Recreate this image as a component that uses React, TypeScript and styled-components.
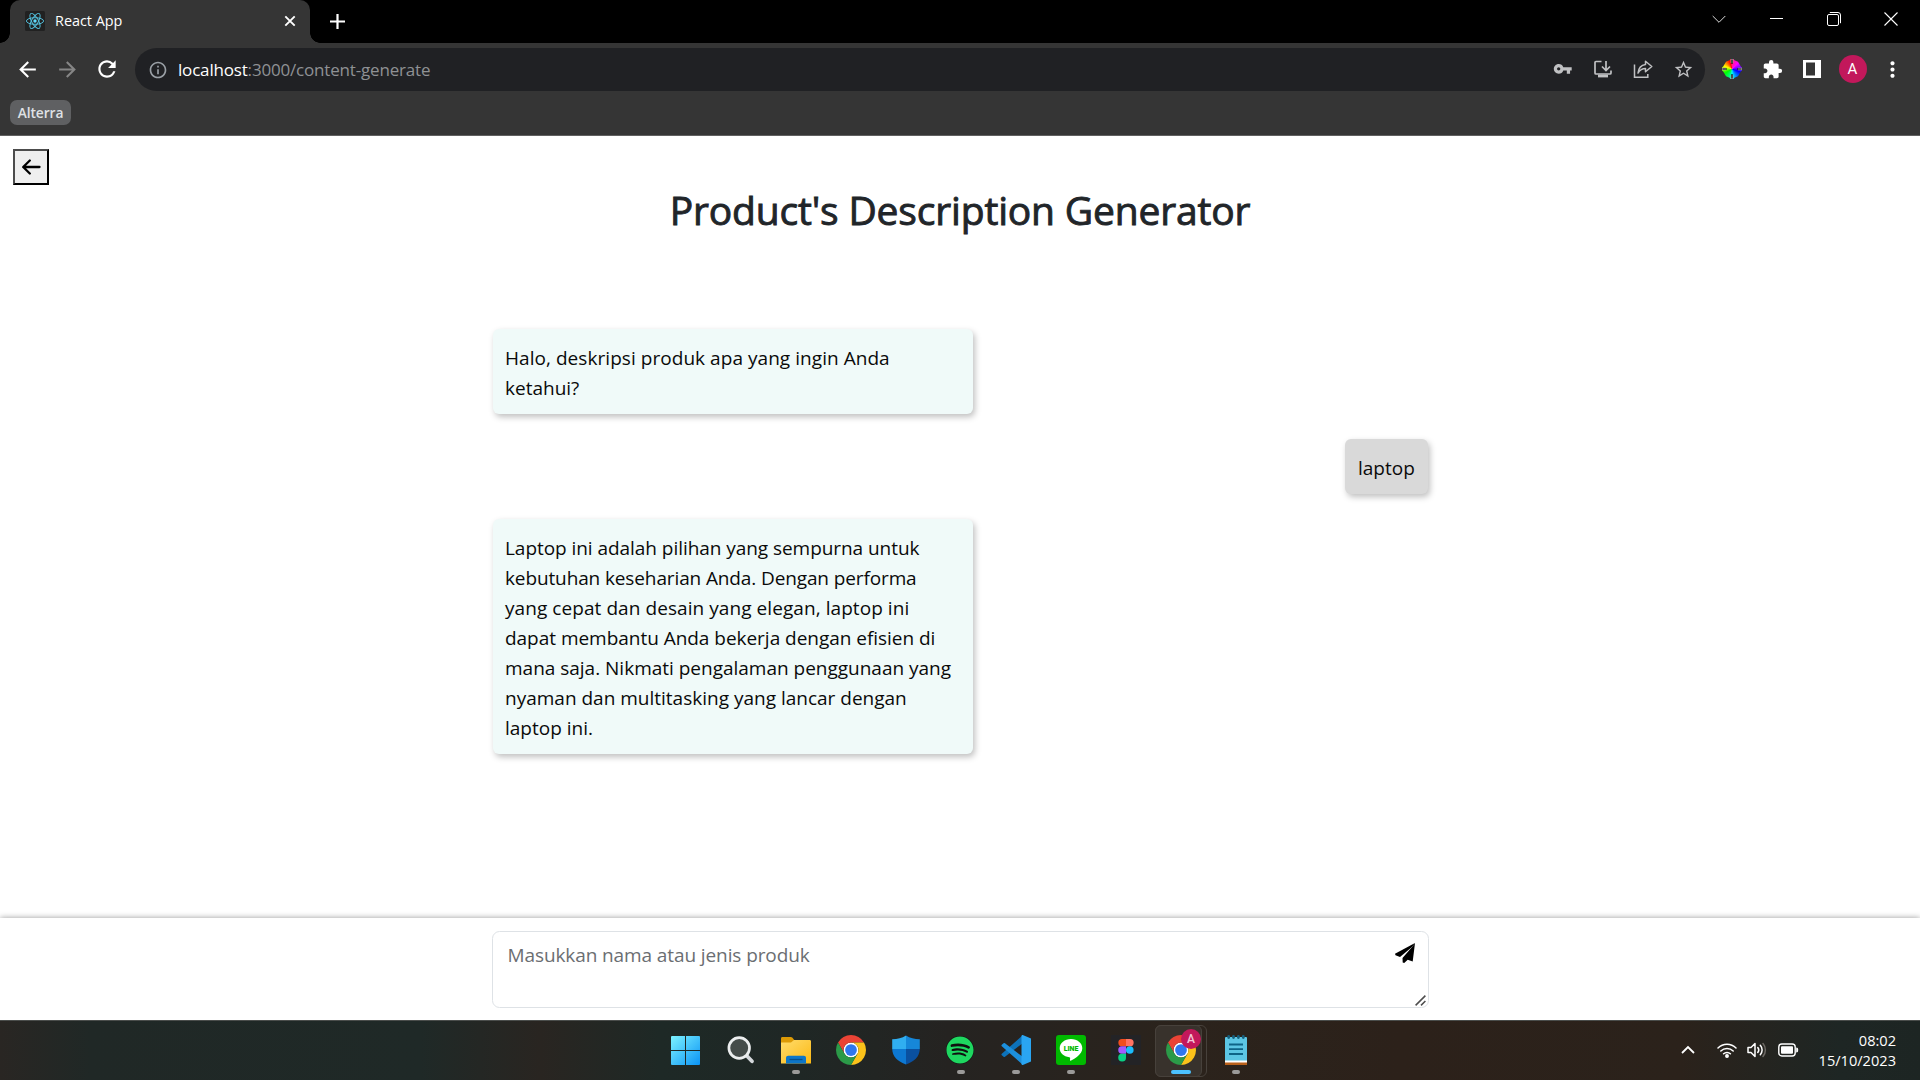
import React from "react";
import styled, { createGlobalStyle } from "styled-components";
import {
  MdArrowBack,
  MdArrowForward,
  MdExtension,
  MdInfoOutline,
  MdMoreVert,
  MdRefresh,
  MdStarBorder,
  MdVpnKey,
} from "react-icons/md";
import { FaSpotify } from "react-icons/fa";

const GlobalStyle = createGlobalStyle`
  * { box-sizing: border-box; }
  html, body { margin: 0; padding: 0; overflow: hidden; }
  body { font-family: "Open Sans", "Noto Sans", sans-serif; background: #fff; }
  svg { display: block; flex: none; }
`;

const Screen = styled.div`
  width: 1920px;
  height: 1080px;
  display: flex;
  flex-direction: column;
  overflow: hidden;
`;

/* ---------- browser chrome ---------- */

const TabStrip = styled.div`
  height: 43px;
  background: #000;
  display: flex;
  padding-left: 10px;
`;

const Tab = styled.div`
  position: relative;
  width: 300px;
  height: 43px;
  background: #353535;
  border-radius: 10px 10px 0 0;
  display: flex;
  align-items: center;
  padding: 0 14px 1px 15px;
  color: #fff;

  &::before,
  &::after {
    content: "";
    position: absolute;
    bottom: 0;
    width: 10px;
    height: 10px;
  }
  &::before {
    left: -10px;
    background: radial-gradient(circle at 0 0, #000 9.5px, #353535 10px);
  }
  &::after {
    right: -10px;
    background: radial-gradient(circle at 100% 0, #000 9.5px, #353535 10px);
  }
`;

const TabTitle = styled.span`
  flex: 1;
  margin-left: 10px;
  font-size: 14.4px;
  line-height: 20px;
`;

const NewTab = styled.div`
  width: 55px;
  height: 42px;
  display: grid;
  place-items: center;
`;

const WindowControls = styled.div`
  margin-left: auto;
  height: 37px;
  display: flex;
`;

const WindowButton = styled.div`
  width: 57.4px;
  display: grid;
  place-items: center;
`;

const Toolbar = styled.div`
  height: 53px;
  background: #353535;
  display: flex;
  align-items: center;
  padding: 0 8px 0 7px;
`;

const ToolButton = styled.div<{ $tone?: string }>`
  width: 40px;
  height: 40px;
  padding-bottom: 1px;
  flex: none;
  display: grid;
  place-items: center;
  color: ${(p) => p.$tone ?? "#fff"};
`;

const Omnibox = styled.div`
  flex: 1;
  height: 43px;
  margin: 0 7px 0 8px;
  padding: 0 2px 0 13px;
  border-radius: 22px;
  background: #202124;
  display: flex;
  align-items: center;
  color: #9aa0a6;
`;

const Url = styled.span`
  flex: 1;
  margin-left: 10px;
  font-size: 17px;
  letter-spacing: -0.18px;
  line-height: 24px;
  color: #8f9194;
  b {
    font-weight: 400;
    color: #fff;
  }
`;

const Avatar = styled.div`
  width: 28px;
  height: 28px;
  margin-left: 1px;
  border-radius: 50%;
  background: #c2185b;
  color: #fff;
  font: 15px/28px Roboto, sans-serif;
  text-align: center;
`;

const Bookmarks = styled.div`
  height: 40px;
  background: #353535;
  border-bottom: 1px solid #606060;
  padding: 4px 10px;
`;

const BookmarkFolder = styled.div`
  width: 61px;
  height: 25px;
  border-radius: 7px;
  background: #5f6062;
  color: #dfe1e5;
  font-size: 13.8px;
  font-weight: 600;
  letter-spacing: -0.1px;
  line-height: 25px;
  text-align: center;
`;

/* ---------- page ---------- */

const Page = styled.main`
  height: 884px;
  background: #fff;
  display: flex;
  flex-direction: column;
`;

const PageHeader = styled.header`
  height: 193px;
  padding: 13px;
  display: flex;
  flex-direction: column;
`;

const BackButton = styled.button`
  width: 36px;
  height: 36px;
  padding: 0 1px 0 0;
  border: 2px solid;
  border-color: #4c4c4c #000 #000 #4c4c4c;
  background: #efefef;
  display: grid;
  place-items: center;
`;

const Title = styled.h1`
  margin: 1px 0 0;
  align-self: center;
  font-size: 39px;
  font-weight: 400;
  letter-spacing: -0.17px;
  line-height: 48px;
  color: #212529;
  -webkit-text-stroke: 0.9px #212529;
`;

const Chat = styled.section`
  width: 936px;
  flex: 1;
  margin: 0 auto;
  padding-left: 1px;
  display: flex;
  flex-direction: column;
  gap: 25px;
`;

const Bubble = styled.div<{ $mine?: boolean }>`
  width: ${(p) => (p.$mine ? "83px" : "480px")};
  align-self: ${(p) => (p.$mine ? "flex-end" : "flex-start")};
  padding: 13.5px 0 11.5px ${(p) => (p.$mine ? "13px" : "12px")};
  border-radius: 6px;
  background: ${(p) => (p.$mine ? "#d9d9d9" : "#f0faf9")};
  box-shadow: 2px 3px 6px rgba(0, 0, 0, 0.25);
  font-size: 19px;
  line-height: 30px;
  color: #0a0a0a;
  white-space: nowrap;
`;

const Line = styled.span<{ $track?: number }>`
  display: block;
  letter-spacing: ${(p) => p.$track ?? 0}px;
`;

const Composer = styled.footer`
  height: 102px;
  background: #fff;
  box-shadow: 0 0 6px rgba(0, 0, 0, 0.4);
  display: flex;
  justify-content: center;
  padding-top: 13px;
`;

const Field = styled.div`
  position: relative;
  width: 937px;
  height: 77px;
`;

const Input = styled.textarea`
  width: 100%;
  height: 100%;
  display: block;
  resize: none;
  border: 1px solid #dee2e6;
  border-radius: 7.5px;
  padding: 8px 15px;
  outline: 0;
  background: #fff;
  font: 19px/30px "Open Sans", sans-serif;
  letter-spacing: -0.1px;
  &::placeholder {
    color: #6b6e72;
    opacity: 1;
  }
`;

const SendButton = styled.div`
  position: absolute;
  top: 12px;
  right: 13px;
`;

const Grip = styled.div`
  position: absolute;
  right: 3px;
  bottom: 2px;
`;

/* ---------- taskbar ---------- */

const Taskbar = styled.div`
  position: relative;
  height: 60px;
  border-top: 1px solid #4a4d4b;
  background: linear-gradient(
    90deg,
    #292623 0,
    #202826 90px,
    #1f2927 420px,
    #292521 540px,
    #1e2926 660px,
    #1f2725 800px,
    #252321 950px,
    #2b231c 1180px,
    #2c211a 1400px,
    #2b221b 1680px,
    #1e2624 1840px,
    #1d2523 1920px
  );
  display: flex;
  justify-content: center;
`;

const Apps = styled.div`
  display: flex;
  height: 58px;
  padding-left: 1px;
`;

const AppSlot = styled.div<{ $active?: boolean }>`
  position: relative;
  width: 55px;
  height: 58px;
  display: flex;
  align-items: center;
  justify-content: center;
  isolation: isolate;

  &::before,
  &::after {
    content: "";
    display: ${(p) => (p.$active ? "block" : "none")};
    position: absolute;
    z-index: -1;
    top: 4px;
    height: 50px;
    border: 1px solid #47413b;
    border-radius: 6px;
  }
  &::before {
    left: 2px;
    width: 50px;
  }
  &::after {
    left: 2px;
    width: 45px;
    background: #38322c;
  }
`;

const Indicator = styled.i<{ $active?: boolean }>`
  position: absolute;
  bottom: 5px;
  left: 50%;
  width: ${(p) => (p.$active ? 20 : 8)}px;
  height: 4px;
  border-radius: 2px;
  background: ${(p) => (p.$active ? "#4cc2ff" : "#9b9a99")};
  transform: translateX(-50%);
`;

const ProfileBadge = styled.div`
  position: absolute;
  top: 8px;
  left: 28px;
  width: 20px;
  height: 20px;
  border-radius: 50%;
  background: #c2185b;
  color: #f3c6d7;
  font: 500 12px/20px Roboto, sans-serif;
  text-align: center;
`;

const Tray = styled.div`
  position: absolute;
  right: 24px;
  top: 0;
  height: 57px;
  display: flex;
  align-items: center;
  color: #fff;
`;

const TraySlot = styled.div<{ $w: number }>`
  width: ${(p) => p.$w}px;
  display: grid;
  place-items: center;
`;

const Clock = styled.div`
  width: 88px;
  font-size: 14.6px;
  line-height: 20px;
  text-align: right;
`;

/* ---------- drawings ---------- */

const ReactMark = () => (
  <svg width="20" height="20" viewBox="0 0 20 20">
    <rect width="20" height="20" rx="1.5" fill="#212121" />
    <g fill="none" stroke="#53c1de" strokeWidth="0.95">
      {[30, 90, 150].map((a) => (
        <ellipse key={a} cx="10" cy="10" rx="8.6" ry="3.3" transform={`rotate(${a - 30} 10 10)`} />
      ))}
    </g>
    <circle cx="10" cy="10" r="1.7" fill="#61dafb" />
  </svg>
);

const Chrome = () => (
  <svg width="30" height="30" viewBox="0 0 48 48">
    <circle cx="24" cy="24" r="12" fill="#fff" />
    <path fill="#ea4335" d="M24 12h20.78A24 24 0 0 0 3.22 12l10.39 18A12 12 0 0 1 24 12Z" />
    <path fill="#fbc21a" d="M34.39 30 24 48a24 24 0 0 0 20.78-36H24a12 12 0 0 1 10.39 18Z" />
    <path fill="#2b9a48" d="M13.61 30 3.22 12A24 24 0 0 0 24 48l10.39-18a12 12 0 0 1-20.78 0Z" />
    <circle cx="24" cy="24" r="9.4" fill="#2f77ee" />
  </svg>
);

const WindowsLogo = () => (
  <svg width="29" height="29" viewBox="0 0 29 29">
    <defs>
      <linearGradient id="win" x1="0" y1="0" x2="1" y2="1">
        <stop offset="0" stopColor="#7df3ff" />
        <stop offset="1" stopColor="#0a93f5" />
      </linearGradient>
    </defs>
    <path
      fill="url(#win)"
      d="M1 0h13v14H0V1a1 1 0 0 1 1-1ZM15 0h13a1 1 0 0 1 1 1v13H15ZM0 15h14v14H1a1 1 0 0 1-1-1ZM15 15h14v13a1 1 0 0 1-1 1H15Z"
    />
  </svg>
);

const SearchLogo = () => (
  <svg width="30" height="30" viewBox="0 0 30 30">
    <path d="m20 20 6 6.3" stroke="#d5d8dc" strokeWidth="3.8" strokeLinecap="round" />
    <circle cx="13.2" cy="13" r="10.3" fill="#454c4a" stroke="#eceeef" strokeWidth="2.7" />
  </svg>
);

const Folder = () => (
  <svg width="30" height="30" viewBox="0 0 30 30">
    <defs>
      <linearGradient id="fold" x1="0" y1="0" x2="1" y2="1">
        <stop offset="0" stopColor="#ffdc6c" />
        <stop offset="1" stopColor="#fbb914" />
      </linearGradient>
    </defs>
    <path fill="#dc9a06" d="M1.5 2h8.2c.8 0 1.3.3 1.8.8L14 6v6H0V3.500C0 2.500.6 2 1.500 2Z" />
    <path fill="url(#fold)" d="M0 7.500h10l3-2.500h15.500c1 0 1.500.5 1.500 1.500V28.500H0Z" />
    <path fill="#0d76c8" d="M5 28.500V23c0-1.300.9-2.200 2.200-2.200h15.600c1.300 0 2.200.9 2.200 2.200v5.500Z" />
    <path stroke="#064f8c" strokeWidth="1.300" d="M8.500 24.500h13" />
  </svg>
);

const Shield = () => (
  <svg width="30" height="30" viewBox="0 0 30 30">
    <path fill="#30aef0" d="M15 .5C11 3.200 6.500 4 1.200 4.200V14H15Z" />
    <path fill="#1687d9" d="M15 .5c4 2.700 8.500 3.500 13.800 3.700V14H15Z" />
    <path fill="#0d78d2" d="M1.200 14c.3 7.500 5.300 12.500 13.800 15.500V14Z" />
    <path fill="#0a50a0" d="M28.800 14c-.3 7.500-5.300 12.500-13.800 15.500V14Z" />
  </svg>
);

const SpotifyMark = styled.div`
  width: 28px;
  height: 28px;
  margin-right: 2px;
  border-radius: 50%;
  background: #101010;
  color: #1ed760;
  font-size: 28px;
  display: grid;
  place-items: center;
`;

const VsCode = () => (
  <svg width="30" height="30" viewBox="0 0 30 30">
    <path fill="#0d72ba" d="M.8 18.800 22 0v8L4 21.800c-.5.4-1 .3-1.400 0L.8 20.300c-.5-.5-.5-1 0-1.500Z" />
    <path fill="#1c8fdc" d="M.8 11.200 22 30v-8L4 8.200c-.5-.4-1-.3-1.400 0L.8 9.700c-.5.5-.5 1 0 1.500Z" />
    <path fill="#2aa5f2" d="M21.800 0 30 3.500v23L21.800 30c-.9.2-1.300-.4-1.300-1V1c0-.6.500-1.200 1.300-1Z" />
  </svg>
);

const LineApp = () => (
  <svg width="30" height="30" viewBox="0 0 30 30">
    <rect width="30" height="30" rx="3" fill="#00b900" />
    <path
      fill="#fff"
      d="M15 4C8.700 4 3.700 8 3.700 13.200c0 4.700 4 8.300 9.600 9 1 .2.900.6.800 1.500-.2 1.500-.3 2.400 1 1.800 3.500-1.700 11.200-6.300 11.200-12.300C26.300 8 21.300 4 15 4Z"
    />
    <text
      x="15"
      y="16"
      textAnchor="middle"
      fontFamily="Roboto, sans-serif"
      fontWeight="900"
      fontSize="7"
      fill="#00b900"
    >
      LINE
    </text>
  </svg>
);

const Figma = () => (
  <svg width="30" height="30" viewBox="0 0 30 30">
    <rect width="30" height="30" fill="#232326" />
    <path fill="#f24e1e" d="M15 4v7.300h-4a3.650 3.650 0 0 1 0-7.300Z" />
    <path fill="#ff7262" d="M15 4h4a3.650 3.650 0 0 1 0 7.300h-4Z" />
    <path fill="#a259ff" d="M15 11.300v7.500h-4a3.750 3.750 0 0 1 0-7.500Z" />
    <circle cx="18.800" cy="15" r="3.800" fill="#1abcfe" />
    <path fill="#0acf83" d="M11 18.800h4v3.700a3.900 3.900 0 1 1-4-3.700Z" />
  </svg>
);

const Notepad = () => (
  <svg width="22" height="30" viewBox="0 0 22 30">
    <path fill="#b9611b" d="M0 26h22v4H0Z" />
    <path fill="#fff" d="M0 25h22v2.500H0Z" />
    <path fill="#5cc6e4" d="M0 3a1 1 0 0 1 1-1h20a1 1 0 0 1 1 1v22.500H0Z" />
    <path stroke="#0e6487" strokeWidth="1.800" d="M4 9.500h14M4 14.200h14M4 19h14" />
    <path stroke="#175f7c" strokeWidth="2.800" strokeLinecap="round" d="M3.700 1.500v1M8.500 1.500v1M13.400 1.500v1M18.300 1.500v1" />
  </svg>
);

const InstallIcon = () => (
  <svg width="20" height="20" viewBox="0 0 20 20" fill="none" stroke="currentColor" strokeWidth="1.700">
    <path d="M8.500 2.500H3c-.6 0-1 .4-1 1V14c0 .6.400 1 1 1h14c.6 0 1-.4 1-1v-2.500" />
    <path d="M13 2v9M9 7.500l4 4 4-4" />
    <path d="M5 17h10" strokeWidth="2.800" />
  </svg>
);

const ShareIcon = () => (
  <svg width="20" height="20" viewBox="0 0 20 20" fill="none" stroke="currentColor" strokeWidth="1.500">
    <path d="M1.500 5.500v12.800h13.300V15" />
    <path d="M12.500 2.200 18.800 7.500l-6.300 5.300V9.600c-3 0-5.500 1.200-7.500 4.400.5-4.500 3-7.800 7.500-8.500Z" strokeLinejoin="round" />
  </svg>
);

const Wheel = styled.div`
  width: 20px;
  height: 20px;
  display: grid;
  place-items: center;
  background: conic-gradient(#ff2080, #f0f 45deg, #80f 75deg, #00f 110deg, #08f 150deg, #0ff 180deg, #0f6 205deg, #0f0 240deg, #af0 275deg, #ff0 290deg, #f80 315deg, #f00 345deg, #ff2080);
  clip-path: polygon(42% 0, 58% 0, 62% 6%, 80% 14%, 94% 38%, 100% 42%, 100% 58%, 94% 62%, 80% 86%, 62% 94%, 58% 100%, 42% 100%, 38% 94%, 20% 86%, 6% 62%, 0 58%, 0 42%, 6% 38%, 20% 14%, 38% 6%);
`;

const WheelTicks = () => (
  <svg width="20" height="20" viewBox="0 0 20 20">
    <path stroke="#a8a8a8" strokeWidth="2.600" d="M10 0v4M10 16v4M0 10h4M16 10h4" />
    <path stroke="#111" strokeWidth="1.200" d="M10 .5v4.500M10 15v4.500M.5 10H5M15 10h4.500" />
  </svg>
);

const runningApps: { name: string; icon: React.ReactNode; running?: boolean; active?: boolean }[] = [
  { name: "start", icon: <WindowsLogo /> },
  { name: "search", icon: <SearchLogo /> },
  { name: "explorer", icon: <Folder />, running: true },
  { name: "chrome", icon: <Chrome /> },
  { name: "security", icon: <Shield /> },
  { name: "spotify", icon: <SpotifyMark><FaSpotify /></SpotifyMark>, running: true },
  { name: "code", icon: <VsCode />, running: true },
  { name: "line", icon: <LineApp />, running: true },
  { name: "figma", icon: <Figma /> },
  { name: "chrome-profile", icon: <Chrome />, running: true, active: true },
  { name: "notepad", icon: <Notepad />, running: true },
];

const answer: [string, number][] = [
  ["Laptop ini adalah pilihan yang sempurna untuk", -0.05],
  ["kebutuhan keseharian Anda. Dengan performa", -0.12],
  ["yang cepat dan desain yang elegan, laptop ini", 0.07],
  ["dapat membantu Anda bekerja dengan efisien di", -0.03],
  ["mana saja. Nikmati pengalaman penggunaan yang", -0.01],
  ["nyaman dan multitasking yang lancar dengan", 0],
  ["laptop ini.", 0],
];

export default function App() {
  return (
    <Screen>
      <GlobalStyle />
      <TabStrip>
        <Tab>
          <ReactMark />
          <TabTitle>React App</TabTitle>
          <svg width="12" height="12" viewBox="0 0 12 12" stroke="#fff" strokeWidth="1.900">
            <path d="m1.300 1.300 9.400 9.400M10.700 1.300l-9.400 9.400" />
          </svg>
        </Tab>
        <NewTab>
          <svg width="15" height="15" viewBox="0 0 15 15" stroke="#fff" strokeWidth="2.200">
            <path d="M7.500 0v15M0 7.500h15" />
          </svg>
        </NewTab>
        <WindowControls>
          <WindowButton>
            <svg width="14" height="14" viewBox="0 0 14 14" fill="none" stroke="#ddd">
              <path d="m.7 4 6.300 6.300L13.300 4" />
            </svg>
          </WindowButton>
          <WindowButton>
            <svg width="13" height="13" viewBox="0 0 13 13" stroke="#fff">
              <path d="M0 6.500h13" />
            </svg>
          </WindowButton>
          <WindowButton>
            <svg width="14" height="14" viewBox="0 0 14 14" fill="none" stroke="#fff">
              <rect x=".5" y="2.500" width="11" height="11" rx="1.500" />
              <path d="M2.800.5H11A2.500 2.500 0 0 1 13.500 3v8.200" />
            </svg>
          </WindowButton>
          <WindowButton>
            <svg width="14" height="14" viewBox="0 0 14 14" stroke="#fff" strokeWidth="1.100">
              <path d="m.5.5 13 13M13.500.5l-13 13" />
            </svg>
          </WindowButton>
        </WindowControls>
      </TabStrip>

      <Toolbar>
        <ToolButton><MdArrowBack size={25} /></ToolButton>
        <ToolButton $tone="#868686"><MdArrowForward size={25} /></ToolButton>
        <ToolButton><MdRefresh size={26} /></ToolButton>
        <Omnibox>
          <MdInfoOutline size={20} />
          <Url><b>localhost</b>:3000/content-generate</Url>
          <ToolButton $tone="#c0c1c3"><MdVpnKey size={19.5} /></ToolButton>
          <ToolButton $tone="#c0c1c3"><InstallIcon /></ToolButton>
          <ToolButton $tone="#c0c1c3"><ShareIcon /></ToolButton>
          <ToolButton $tone="#c0c1c3"><MdStarBorder size={21} /></ToolButton>
        </Omnibox>
        <ToolButton><Wheel><WheelTicks /></Wheel></ToolButton>
        <ToolButton><MdExtension size={21} /></ToolButton>
        <ToolButton>
          <svg width="18" height="18" viewBox="0 0 18 18">
            <path fill="#fff" fillRule="evenodd" d="M0 0h18v18H0ZM3 2.500v13h9v-13Z" />
          </svg>
        </ToolButton>
        <ToolButton><Avatar>A</Avatar></ToolButton>
        <ToolButton><MdMoreVert size={25} /></ToolButton>
      </Toolbar>

      <Bookmarks>
        <BookmarkFolder>Alterra</BookmarkFolder>
      </Bookmarks>

      <Page>
        <PageHeader>
          <BackButton>
            <svg width="20" height="16" viewBox="0 0 20 16" fill="none" stroke="#000" strokeWidth="2.300" strokeLinecap="round" strokeLinejoin="round">
              <path d="M8.800 1.500 2.200 8l6.600 6.500M2.500 8h16" />
            </svg>
          </BackButton>
          <Title>Product's Description Generator</Title>
        </PageHeader>
        <Chat>
          <Bubble>
            <Line $track={0.05}>Halo, deskripsi produk apa yang ingin Anda</Line>
            <Line>ketahui?</Line>
          </Bubble>
          <Bubble $mine>
            <Line>laptop</Line>
          </Bubble>
          <Bubble>
            {answer.map(([text, track]) => (
              <Line key={text} $track={track}>{text}</Line>
            ))}
          </Bubble>
        </Chat>
        <Composer>
          <Field>
            <Input placeholder="Masukkan nama atau jenis produk" />
            <SendButton>
              <svg width="21" height="20" viewBox="0 0 21 20">
                <path d="M20 0 0 10.800l.5 1.500L5 14 17.300 3.800Z" />
                <path d="M20 0 17.700 18.500l-5-1.800L9.200 20l-1.500-.5L7.500 15 17.300 3.800Z" />
              </svg>
            </SendButton>
            <Grip>
              <svg width="11" height="11" viewBox="0 0 11 11" stroke="#4d4d4d" strokeWidth="1.500">
                <path d="m.6 10.400 9.800-9.800M6 10.400l4.400-4.400" />
              </svg>
            </Grip>
          </Field>
        </Composer>
      </Page>

      <Taskbar>
        <Apps>
          {runningApps.map((app) => (
            <AppSlot key={app.name} $active={app.active}>
              {app.icon}
              {app.active && <ProfileBadge>A</ProfileBadge>}
              {app.running && <Indicator $active={app.active} />}
            </AppSlot>
          ))}
        </Apps>
        <Tray>
          <TraySlot $w={40}>
            <svg width="14" height="9" viewBox="0 0 14 9" fill="none" stroke="#fff" strokeWidth="1.800">
              <path d="m1 8 6-6 6 6" />
            </svg>
          </TraySlot>
          <TraySlot $w={38}>
            <svg width="20" height="16" viewBox="0 0 20 16" fill="none" stroke="#fff" strokeWidth="1.500" strokeLinecap="round">
              <path d="M1 6a12.700 12.700 0 0 1 18 0M3.800 9a8.800 8.800 0 0 1 12.400 0M6.600 11.800a4.800 4.800 0 0 1 6.800 0" />
              <circle cx="10" cy="14" r="1.200" fill="#fff" />
            </svg>
          </TraySlot>
          <TraySlot $w={22}>
            <svg width="20" height="16" viewBox="0 0 20 16" fill="none" stroke="#fff" strokeWidth="1.500" strokeLinecap="round" strokeLinejoin="round">
              <path d="M1 5.500h3l4-4v13l-4-4H1Z" />
              <path d="M10.800 5.500a4 4 0 0 1 0 5M13.300 3.300a7 7 0 0 1 0 9.400" />
              <path d="M16 1.500a10 10 0 0 1 0 13" stroke="#6d6964" />
            </svg>
          </TraySlot>
          <TraySlot $w={40}>
            <svg width="21" height="14" viewBox="0 0 21 14">
              <rect x=".8" y="1" width="16.400" height="12" rx="3" fill="none" stroke="#fff" strokeWidth="1.400" />
              <rect x="3" y="3.200" width="12" height="7.600" rx="1" fill="#fff" />
              <path fill="#fff" d="M18.200 4.500c1.500 0 2 .8 2 2.500s-.5 2.500-2 2.500Z" />
            </svg>
          </TraySlot>
          <Clock>
            08:02
            <br />
            15/10/2023
          </Clock>
        </Tray>
      </Taskbar>
    </Screen>
  );
}
